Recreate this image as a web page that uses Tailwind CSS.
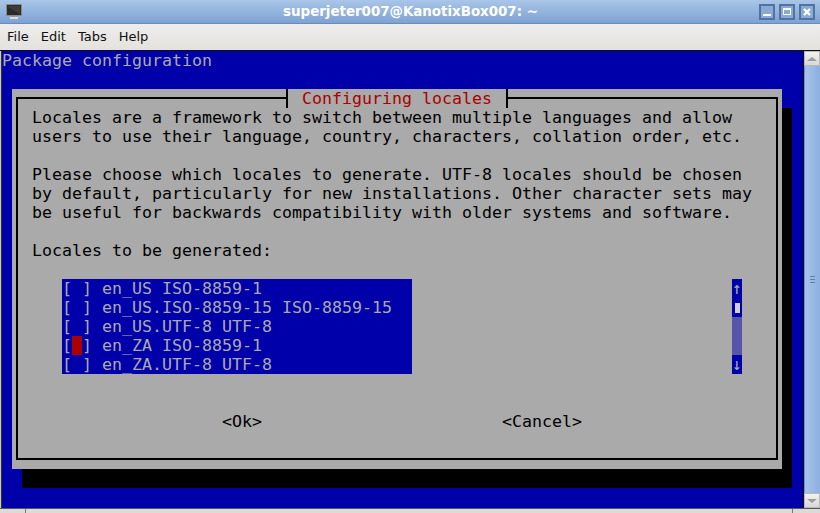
<!DOCTYPE html>
<html lang="en">
<head>
<meta charset="UTF-8">
<title>superjeter007@KanotixBox007: ~</title>
<script src="https://cdn.jsdelivr.net/npm/@tailwindcss/browser@4"></script>
</head>
<body class="w-[820px] h-[513px] overflow-hidden bg-[#e6e5e2] font-['DejaVu_Sans',sans-serif]">

  <!-- title bar -->
  <div class="h-[24px] flex items-center pl-[6px] pr-[5px] bg-gradient-to-b from-[#a9c6e8] to-[#7ea2d2] border-b border-[#6a8bb5]">
    <svg class="w-[16px] h-[16px] shrink-0" viewBox="0 0 16 16">
      <rect x="0.5" y="0.5" width="15" height="11" fill="#2a2a2a" stroke="#8a8a8a"/>
      <path d="M2 2h12v8L2 3z" fill="#3c3c3c"/>
      <rect x="5" y="12" width="6" height="1" fill="#9a9a9a"/>
      <rect x="4" y="13" width="8" height="2" fill="#dedede"/>
    </svg>
    <div class="flex-1 text-center text-white font-bold text-[13.4px] leading-[22px] pl-[40px]">superjeter007@KanotixBox007: ~</div>
    <div class="flex gap-[4px]">
      <div class="w-[16px] h-[16px] border-2 border-[#50749f] bg-[#8aaad6] flex items-end justify-center pb-[2px]">
        <div class="w-[8px] h-[2px] bg-white"></div>
      </div>
      <div class="w-[16px] h-[16px] border-2 border-[#50749f] bg-[#8aaad6] flex items-center justify-center">
        <div class="w-[8px] h-[7px] border border-t-2 border-white"></div>
      </div>
      <div class="w-[16px] h-[16px] border-2 border-[#50749f] bg-[#8aaad6] flex items-center justify-center">
        <svg class="w-[8px] h-[8px]" viewBox="0 0 8 8"><path d="M1 1l6 6M7 1l-6 6" stroke="#fff" stroke-width="2.2"/></svg>
      </div>
    </div>
  </div>

  <!-- menu bar -->
  <div class="h-[27px] flex items-center pl-[7px] pb-[1px] gap-[12px] text-[13px] text-[#111] bg-gradient-to-b from-[#eeedeb] to-[#e3e2df] border-b border-[#111]">
    <span>File</span><span>Edit</span><span>Tabs</span><span>Help</span>
  </div>

  <div class="flex h-[457px]">
    <!-- terminal -->
    <div class="w-[804px] pl-[1px] border-r border-[#111] bg-[#c8c8c4]">
      <div class="h-full border-l border-[#333] bg-[#0000aa] text-[#aaaaaa] font-['DejaVu_Sans_Mono',monospace] text-[16.61px] leading-[19px]">
        <div class="h-[38px] whitespace-pre">Package configuration</div>

        <!-- dialog, the shadow is one cell right and one row down -->
        <div class="relative ml-[10px] w-[770px] h-[380px] px-[4px] pt-[8px] bg-[#aaaaaa] text-black shadow-[10px_19px_0_#000]">
          <div class="h-[363px] border-2 border-black pl-[14px] pt-[9px]">
            <div class="whitespace-pre">Locales are a framework to switch between multiple languages and allow
users to use their language, country, characters, collation order, etc.

Please choose which locales to generate. UTF-8 locales should be chosen
by default, particularly for new installations. Other character sets may
be useful for backwards compatibility with older systems and software.

Locales to be generated:</div>
            <div class="flex mt-[19px] ml-[30px]">
              <div class="w-[350px] bg-[#0000aa] text-[#aaaaaa]">
                <div class="h-[19px] whitespace-pre">[ ] en_US ISO-8859-1</div>
                <div class="h-[19px] whitespace-pre">[ ] en_US.ISO-8859-15 ISO-8859-15</div>
                <div class="h-[19px] whitespace-pre">[ ] en_US.UTF-8 UTF-8</div>
                <div class="h-[19px] whitespace-pre flex"><span>[</span><span class="w-[10px] bg-[#aa0000]"></span><span>] en_ZA ISO-8859-1</span></div>
                <div class="h-[19px] whitespace-pre">[ ] en_ZA.UTF-8 UTF-8</div>
              </div>
              <div class="ml-[320px] w-[10px] text-[#aaaaaa]">
                <div class="h-[19px] bg-[#0000aa]">↑</div>
                <div class="h-[19px] bg-[#0000aa] flex items-center justify-center"><div class="w-[5px] h-[10px] bg-[#d0d0d8]"></div></div>
                <div class="h-[38px] bg-[#5555aa]"></div>
                <div class="h-[19px] bg-[#0000aa]">↓</div>
              </div>
            </div>
            <div class="flex mt-[38px] ml-[190px]">
              <span class="w-[280px]">&lt;Ok&gt;</span><span>&lt;Cancel&gt;</span>
            </div>
          </div>
          <!-- title sits on top of the border line -->
          <div class="absolute left-[274px] top-0 w-[222px] h-[19px] pl-[14px] border-x-2 border-black bg-[#aaaaaa] text-[#aa0000]">Configuring locales</div>
        </div>
      </div>
    </div>

    <!-- scrollbar -->
    <div class="w-[16px] flex flex-col bg-[#8fb2e0]">
      <div class="h-[15px] bg-gradient-to-b from-[#f2f2f0] to-[#d8d8d6] border border-[#b8b8b8] flex items-center justify-center">
        <div class="w-0 h-0 border-x-[5px] border-x-transparent border-b-[4px] border-b-[#9c9c9c]"></div>
      </div>
      <div class="flex-1 bg-gradient-to-r from-[#a6c4ea] to-[#8caee0] border-l border-[#6f90c0] flex flex-col items-center justify-center gap-[2px]">
        <div class="w-[5px] h-[1px] bg-[#5f7ea8]"></div>
        <div class="w-[5px] h-[1px] bg-[#5f7ea8]"></div>
        <div class="w-[5px] h-[1px] bg-[#5f7ea8]"></div>
      </div>
      <div class="h-[15px] bg-gradient-to-b from-[#f2f2f0] to-[#d8d8d6] border border-[#b8b8b8] flex items-center justify-center">
        <div class="w-0 h-0 border-x-[5px] border-x-transparent border-t-[4px] border-t-[#9c9c9c]"></div>
      </div>
    </div>
  </div>

  <!-- status bar -->
  <div class="h-[5px] flex border-t border-[#555] bg-[#dcdbd8]">
    <div class="w-[26px] border-r border-[#777]"></div>
    <div class="w-[767px] border-r border-[#777]"></div>
  </div>
</body>
</html>
